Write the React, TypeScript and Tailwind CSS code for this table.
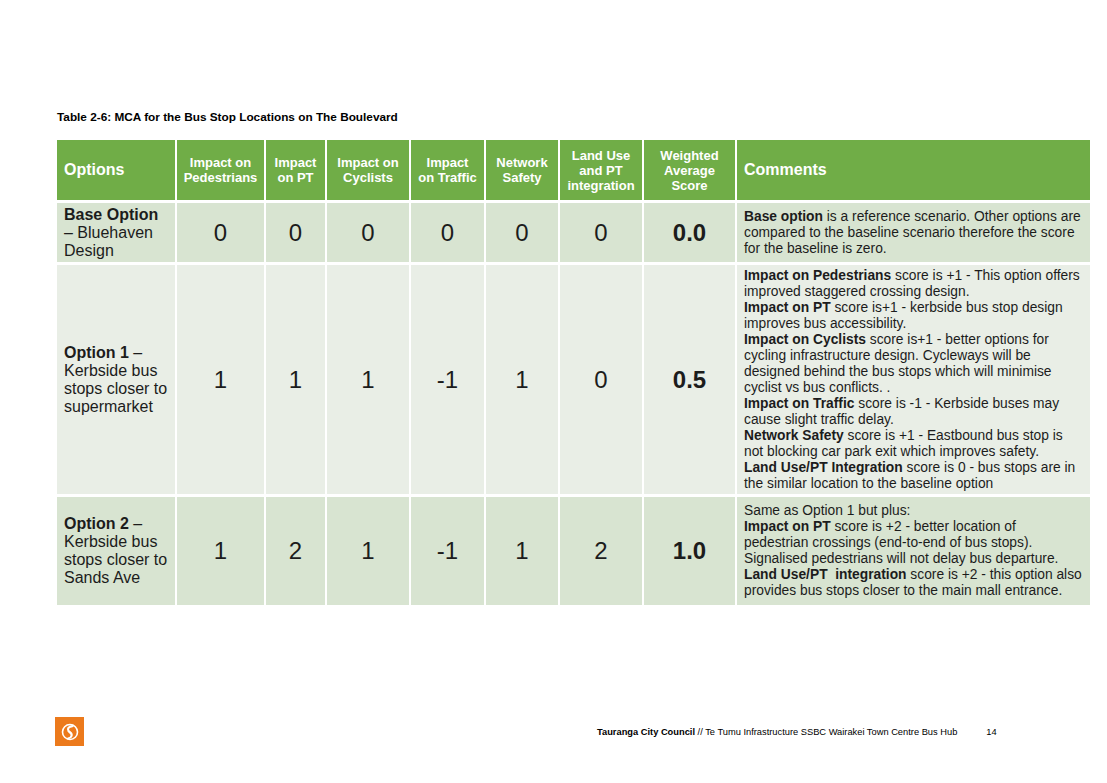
import React from "react";

const F = { fontFamily: '"Liberation Sans", Arial, sans-serif' };

type Row = {
  label: React.ReactNode;
  vals: string[];
  score: string;
  comment: React.ReactNode[];
  bg: string;
};

const rows: Row[] = [
  {
    label: (
      <>
        <b>Base Option</b>
        <br />– Bluehaven
        <br />
        Design
      </>
    ),
    vals: ["0", "0", "0", "0", "0", "0"],
    score: "0.0",
    comment: [
      <>
        <b>Base option</b> is a reference scenario. Other options are
      </>,
      "compared to the baseline scenario therefore the score",
      "for the baseline is zero.",
    ],
    bg: "bg-[#d8e4d1]",
  },
  {
    label: (
      <>
        <b>Option 1</b> –<br />
        Kerbside bus
        <br />
        stops closer to
        <br />
        supermarket
      </>
    ),
    vals: ["1", "1", "1", "-1", "1", "0"],
    score: "0.5",
    comment: [
      <>
        <b>Impact on Pedestrians</b> score is +1 - This option offers
      </>,
      "improved staggered crossing design.",
      <>
        <b>Impact on PT</b> score is+1 - kerbside bus stop design
      </>,
      "improves bus accessibility.",
      <>
        <b>Impact on Cyclists</b> score is+1 - better options for
      </>,
      "cycling infrastructure design. Cycleways will be",
      "designed behind the bus stops which will minimise",
      "cyclist vs bus conflicts. .",
      <>
        <b>Impact on Traffic</b> score is -1 - Kerbside buses may
      </>,
      "cause slight traffic delay.",
      <>
        <b>Network Safety</b> score is +1 - Eastbound bus stop is
      </>,
      "not blocking car park exit which improves safety.",
      <>
        <b>Land Use/PT Integration</b> score is 0 - bus stops are in
      </>,
      "the similar location to the baseline option",
    ],
    bg: "bg-[#e9eee6]",
  },
  {
    label: (
      <>
        <b>Option 2</b> –<br />
        Kerbside bus
        <br />
        stops closer to
        <br />
        Sands Ave
      </>
    ),
    vals: ["1", "2", "1", "-1", "1", "2"],
    score: "1.0",
    comment: [
      "Same as Option 1 but plus:",
      <>
        <b>Impact on PT</b> score is +2 - better location of
      </>,
      "pedestrian crossings (end-to-end of bus stops).",
      "Signalised pedestrians will not delay bus departure.",
      <>
        <b>Land Use/PT&nbsp; integration</b> score is +2 - this option also
      </>,
      "provides bus stops closer to the main mall entrance.",
    ],
    bg: "bg-[#d8e4d1]",
  },
];

const headers = [
  ["Impact on", "Pedestrians"],
  ["Impact", "on PT"],
  ["Impact on", "Cyclists"],
  ["Impact", "on Traffic"],
  ["Network", "Safety"],
  ["Land Use", "and PT", "integration"],
  ["Weighted", "Average", "Score"],
];

function Logo() {
  return (
    <div className="w-[29px] h-[29px] bg-[#ec7a1c] flex items-center justify-center">
      <svg width="20" height="20" viewBox="0 0 20 20" fill="none">
        <circle cx="10" cy="10" r="7.5" stroke="white" strokeWidth="1.6" />
        <path
          d="M12.5 4.2 C8.5 4.5 7 7 8.5 9 C10 11 12.5 11 11.5 14 C11 15.5 9.5 16.3 8 16.5"
          stroke="white"
          strokeWidth="2.2"
          strokeLinecap="round"
          fill="none"
        />
      </svg>
    </div>
  );
}

export default function App() {
  return (
    <div className="w-[1107px] h-[783px] bg-white text-[#1c1c1c] overflow-hidden" style={F}>
      <div className="pl-[57px] pt-[110px]">
        <div className="text-[11.8px] leading-[14px] font-bold text-black">
          Table 2-6: MCA for the Bus Stop Locations on The Boulevard
        </div>
        <div className="mt-[16px] grid grid-cols-[118px_87px_59px_82px_73px_72px_82px_91px_353px] grid-rows-[60px_59px_229px_108px] gap-x-[2px] gap-y-[3px] w-[1033px]">
          <div className="bg-[#70ad47] text-white font-bold text-[16px] flex items-center px-[7px]">Options</div>
          {headers.map((h, i) => (
            <div
              key={i}
              className="bg-[#70ad47] text-white font-bold text-[13px] leading-[15px] flex flex-col items-center justify-center text-center"
            >
              {h.map((l, j) => (
                <span key={j}>{l}</span>
              ))}
            </div>
          ))}
          <div className="bg-[#70ad47] text-white font-bold text-[16px] flex items-center px-[7px]">Comments</div>
          {rows.map((r, ri) => (
            <React.Fragment key={ri}>
              <div className={`${r.bg} flex items-center px-[7px] text-[16px] leading-[18px]`}>
                <div>{r.label}</div>
              </div>
              {r.vals.map((v, vi) => (
                <div key={vi} className={`${r.bg} flex items-center justify-center text-[24px]`}>
                  {v}
                </div>
              ))}
              <div className={`${r.bg} flex items-center justify-center text-[24px] font-bold`}>{r.score}</div>
              <div className={`${r.bg} flex items-center pl-[7px] pr-[2px] text-[13.8px] leading-[16px] overflow-hidden`}>
                <div className="flex flex-col whitespace-nowrap">
                  {r.comment.map((c, ci) => (
                    <span key={ci}>{c}</span>
                  ))}
                </div>
              </div>
            </React.Fragment>
          ))}
        </div>
      </div>
      <div className="mt-[112px] flex items-center pl-[55px]">
        <Logo />
        <div className="ml-[513px] text-[9.3px] leading-[10px] text-black whitespace-nowrap">
          <b>Tauranga City Council</b> // Te Tumu Infrastructure SSBC Wairakei Town Centre Bus Hub
        </div>
        <div className="ml-[29px] text-[9.3px] leading-[10px] text-black">14</div>
      </div>
    </div>
  );
}
